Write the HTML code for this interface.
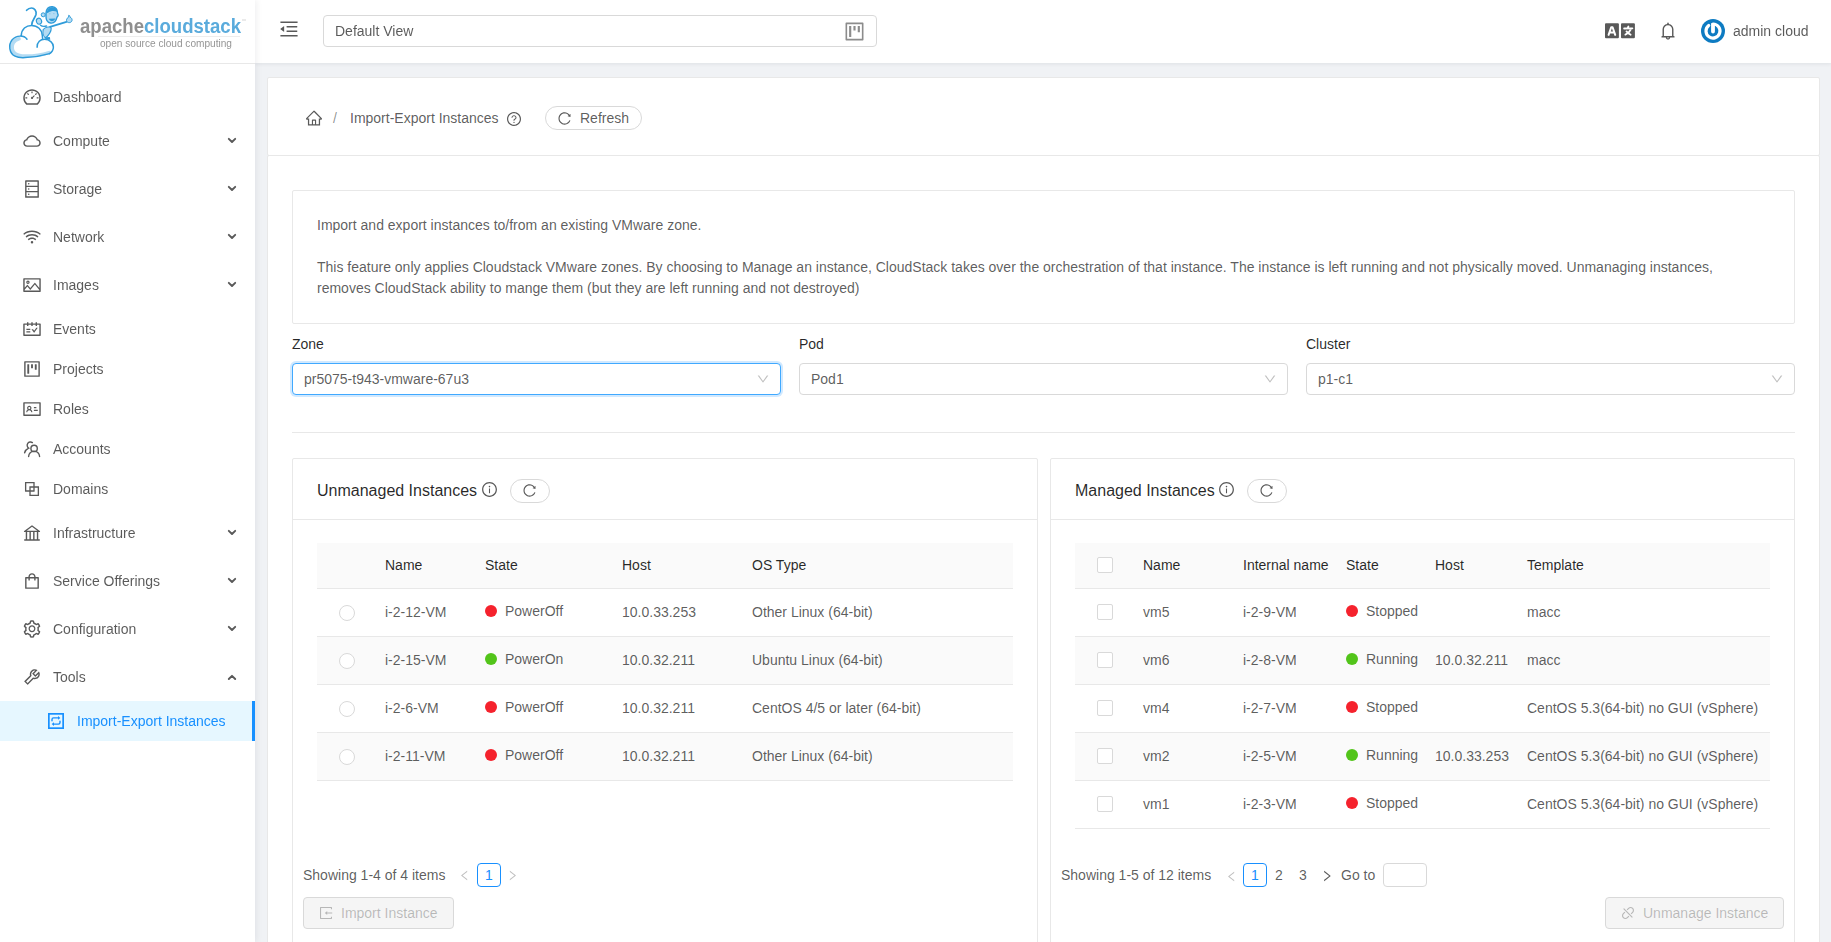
<!DOCTYPE html>
<html><head><meta charset="utf-8">
<style>
*{box-sizing:border-box;margin:0;padding:0}
html,body{width:1831px;height:942px;overflow:hidden;background:#f0f2f5;font-family:"Liberation Sans",sans-serif;font-size:14px;color:rgba(0,0,0,.65);position:relative}
.a{position:absolute}
svg.a{display:block}
.a svg{display:block}
</style></head>
<body>
<div class="a" style="left:0;top:0;width:255px;height:942px;z-index:5;will-change:transform;background:#fff;box-shadow:2px 0 6px rgba(0,21,41,.06)">
<div class="a" style="left:0;top:63px;width:255px;height:1px;background:#e8e8e8"></div>
<svg class="a" style="left:0;top:0" width="255" height="62" viewBox="0 0 255 62">
<g fill="none" stroke-linecap="round" stroke-linejoin="round">
<path d="M19 38.8 C13.5 40 11.2 45 12.3 49.5 C13.3 53.5 17 55.6 22 56 C32 56.4 42 55 49 52.6" stroke="#b3dbf3" stroke-width="3.6"/>
<path d="M27 39.2 C24 35.2 16.5 34.8 12.2 39.8 C8 45 9.3 53.2 15 56.2 C17.5 57.5 21 57.8 25 57.6 C34 57.2 43 55.5 49.6 53.6" stroke="#2e9bd9" stroke-width="1.5"/>
<path d="M21.2 35.8 C21.5 29 26 25.4 31.7 25.4 C37.5 25.4 42 29.5 42.3 35.5 L42.6 38.3" stroke="#2e9bd9" stroke-width="1.5"/>
<path d="M37.1 47.2 C37 42 40.5 39.3 44.5 39.3 C49.5 39.3 53.5 43 53.4 47 C53.3 50 51.8 52.3 49.6 53.6" stroke="#2e9bd9" stroke-width="1.5"/>
<path d="M31.7 25 C32 20 35 18 36 14.5 C36.8 11 34.5 8 31.5 8 C29 8 27.5 9.3 26.6 10.3" stroke="#2e9bd9" stroke-width="1.7"/>
<path d="M40.5 25.2 C42 26.5 44.5 26.5 46.5 26" stroke="#2e9bd9" stroke-width="1.4"/>
<path d="M50 26.8 L66.5 21.8" stroke="#2e9bd9" stroke-width="1.8"/>
</g>
<path d="M43.2 29.5 C45.5 26.8 50.5 26.2 51.2 28 C51.6 31 48.5 36 45.2 37.8 C43.2 36 42.6 32 43.2 29.5Z" fill="#b3dbf3" stroke="#2e9bd9" stroke-width="1.1"/>
<path d="M45 37.2 L49.8 37 L50.3 39.8 L45.5 39.8Z" fill="#2e9bd9"/>
<ellipse cx="39" cy="21.2" rx="2.6" ry="3" fill="#b3dbf3" stroke="#2e9bd9" stroke-width="1.1" transform="rotate(-20 39 21.2)"/>
<path d="M66.5 20.5 C66.5 18.5 67.8 17.5 68.6 17.2 L68.8 15.2 C69.5 15.3 70 16.5 70.2 17.3 C71.5 17.8 72.3 19 72 20.6 C71.6 22.2 70 22.8 68.6 22.6 C67.3 22.3 66.5 21.5 66.5 20.5Z" fill="#b3dbf3" stroke="#2e9bd9" stroke-width="1"/>
<circle cx="43.2" cy="14.8" r="2" fill="#b3dbf3" stroke="#2e9bd9" stroke-width="1"/>
<path d="M46 13 C46.5 8 49.5 6.5 52.5 6.8 C56 7.2 57.5 10 57.6 13.5 C58.5 14.5 58.2 16.5 57 17.2 C56 21.5 53.5 23.5 50.5 23 C47.5 22.5 46 19.5 46 16.5Z" fill="#b3dbf3" stroke="#2e9bd9" stroke-width="1.4"/>
<path d="M46.3 13.5 C47 9 50 7.2 52.5 7.3 C55.5 7.5 57 9.5 57.3 12 C55 10.5 51 10.5 48.5 12.5Z" fill="#2e9bd9"/>
<path d="M49 13.8 H50.6 M53 13.6 H54.6" stroke="#7cc0ea" stroke-width="0.7"/>
<path d="M48.8 18.8 C50 22 54 22 55.3 18.6Z" fill="#2e9bd9"/>
<text x="80" y="33" font-family="Liberation Sans" font-weight="bold" font-size="20" fill="#8f8f8f" textLength="64" lengthAdjust="spacingAndGlyphs">apache</text>
<text x="144" y="33" font-family="Liberation Sans" font-weight="bold" font-size="20" fill="#5aabdc" textLength="97" lengthAdjust="spacingAndGlyphs">cloudstack</text>
<line x1="98" y1="36.5" x2="240" y2="36.5" stroke="#e8e8e8" stroke-width="0.8"/>
<line x1="242" y1="20" x2="246" y2="20" stroke="#bbb" stroke-width="0.6"/>
<text x="100" y="46.8" font-family="Liberation Sans" font-size="11" fill="#959595" textLength="132" lengthAdjust="spacingAndGlyphs">open source cloud computing</text>
</svg>

<div class="a" style="left:22px;top:87px;"><svg width="20" height="20" viewBox="0 0 1024 1024" fill="#595959" ><path d="M924.8 385.6a446.7 446.7 0 00-96-142.4 446.7 446.7 0 00-142.4-96C631.1 123.8 572.5 112 512 112s-119.1 11.8-174.4 35.2a446.7 446.7 0 00-142.4 96 446.7 446.7 0 00-96 142.4C75.8 440.9 64 499.5 64 560c0 132.7 58.3 257.7 159.9 343.1l1.7 1.4c5.8 4.8 13.1 7.5 20.6 7.5h531.7c7.5 0 14.8-2.7 20.6-7.5l1.7-1.4C901.7 817.7 960 692.7 960 560c0-60.5-11.9-119.1-35.2-174.4zM761.4 836H262.6A371.12 371.12 0 01140 560c0-99.4 38.7-192.8 109-263 70.3-70.3 163.7-109 263-109 99.4 0 192.8 38.7 263 109 70.3 70.3 109 163.7 109 263 0 105.6-44.5 205.5-122.6 276zM623.5 421.5a8.030 8.030 0 00-11.300 0L527.7 506c-18.7-5-39.4-.2-54.1 14.5a55.950 55.950 0 000 79.2 55.950 55.950 0 0079.2 0 55.870 55.870 0 0014.5-54.1l84.5-84.5c3.1-3.1 3.1-8.2 0-11.3l-28.3-28.3zM490 320h44c4.4 0 8-3.6 8-8v-80c0-4.4-3.6-8-8-8h-44c-4.4 0-8 3.6-8 8v80c0 4.4 3.6 8 8 8zm260 218v44c0 4.4 3.6 8 8 8h80c4.4 0 8-3.6 8-8v-44c0-4.4-3.6-8-8-8h-80c-4.4 0-8 3.6-8 8zm12.7-197.2l-31.1-31.1a8.030 8.030 0 00-11.300 0l-56.6 56.6a8.030 8.030 0 000 11.3l31.1 31.1c3.1 3.1 8.2 3.1 11.3 0l56.6-56.6c3.1-3.1 3.1-8.2 0-11.3zm-458.6-31.1a8.030 8.030 0 00-11.300 0l-31.1 31.1a8.030 8.030 0 000 11.3l56.6 56.6c3.1 3.1 8.2 3.1 11.3 0l31.1-31.1c3.1-3.1 3.1-8.2 0-11.3l-56.6-56.6zM262 530h-80c-4.4 0-8 3.6-8 8v44c0 4.4 3.6 8 8 8h80c4.4 0 8-3.6 8-8v-44c0-4.4-3.6-8-8-8z"/></svg></div>
<div class="a" style="left:53px;top:89px;font-size:14px;line-height:normal;white-space:nowrap;color:rgba(0,0,0,.65);">Dashboard</div>
<div class="a" style="left:22px;top:131px;"><svg width="20" height="20" viewBox="0 0 1024 1024" fill="#595959" ><path d="M811.4 418.7C765.6 297.9 648.9 212 512.2 212S258.8 297.8 213 418.6C127.3 441.1 64 519.1 64 612c0 110.5 89.5 200 199.9 200h496.2C870.5 812 960 722.5 960 612c0-92.7-63.1-170.7-148.6-193.3zm36.3 281a123.070 123.070 0 01-87.600 36.300H263.9c-33.1 0-64.2-12.9-87.6-36.3A123.300 123.300 0 01140 612c0-28 9.1-54.3 26.2-76.3a125.700 125.700 0 0166.100-43.700l37.9-9.9 13.9-36.6c8.6-22.8 20.6-44.1 35.7-63.4a245.600 245.600 0 0152.400-49.900c41.1-28.9 89.5-44.2 140-44.2s98.9 15.3 140 44.2c19.9 14 37.5 30.8 52.4 49.9 15.1 19.3 27.1 40.7 35.7 63.4l13.8 36.5 37.8 10c54.3 14.5 92.1 63.8 92.1 120 0 33.1-12.9 64.3-36.3 87.7z"/></svg></div>
<div class="a" style="left:53px;top:133px;font-size:14px;line-height:normal;white-space:nowrap;color:rgba(0,0,0,.65);">Compute</div>
<svg class="a" style="left:227px;top:137px" width="10" height="8" viewBox="0 0 10 8"><polyline points="1.8,1.8 5,5 8.2,1.8" fill="none" stroke="#595959" stroke-width="1.9" stroke-linecap="round" stroke-linejoin="round"/></svg>
<div class="a" style="left:22px;top:179px;"><svg width="20" height="20" viewBox="0 0 1024 1024" fill="#595959" ><path d="M832 64H192c-17.7 0-32 14.3-32 32v832c0 17.7 14.3 32 32 32h640c17.7 0 32-14.3 32-32V96c0-17.7-14.3-32-32-32zm-600 72h560v208H232V136zm560 480H232V408h560v208zm0 272H232V680h560v208zM304 240a40 40 0 1080 0 40 40 0 10-80 0zm0 272a40 40 0 1080 0 40 40 0 10-80 0zm0 272a40 40 0 1080 0 40 40 0 10-80 0z"/></svg></div>
<div class="a" style="left:53px;top:181px;font-size:14px;line-height:normal;white-space:nowrap;color:rgba(0,0,0,.65);">Storage</div>
<svg class="a" style="left:227px;top:185px" width="10" height="8" viewBox="0 0 10 8"><polyline points="1.8,1.8 5,5 8.2,1.8" fill="none" stroke="#595959" stroke-width="1.9" stroke-linecap="round" stroke-linejoin="round"/></svg>
<div class="a" style="left:22px;top:227px;"><svg width="20" height="20" viewBox="0 0 1024 1024" fill="#595959" ><path d="M723 620.5C666.8 571.6 593.4 542 513 542s-153.8 29.6-210.1 78.6a8.100 8.100 0 00-.800 11.200l36 42.9c2.9 3.4 8 3.8 11.4.9C393.1 637.2 450.3 614 513 614s119.9 23.2 163.5 61.5c3.4 2.9 8.5 2.5 11.4-.9l36-42.9c2.8-3.3 2.4-8.3-.9-11.2zm117.4-140.1C751.7 406.5 637.6 362 513 362s-238.7 44.5-327.5 118.4a8.050 8.050 0 00-1 11.300l36 42.9c2.8 3.4 7.9 3.8 11.2 1C308 472.2 406.1 434 513 434s205 38.2 281.2 101.6c3.4 2.8 8.4 2.4 11.2-1l36-42.9c2.8-3.4 2.4-8.5-1-11.3zm116.7-139C835.7 241.8 680.3 182 511 182c-168.2 0-322.6 59-443.7 157.4a8 8 0 00-1.100 11.400l36 42.9c2.8 3.3 7.8 3.8 11.1 1.1C222 306.7 360.3 254 511 254c151.8 0 291 53.5 400 142.7 3.4 2.8 8.4 2.3 11.2-1.1l36-42.9c2.9-3.4 2.4-8.5-1.1-11.3zM448 778a64 64 0 10128 0 64 64 0 10-128 0z"/></svg></div>
<div class="a" style="left:53px;top:229px;font-size:14px;line-height:normal;white-space:nowrap;color:rgba(0,0,0,.65);">Network</div>
<svg class="a" style="left:227px;top:233px" width="10" height="8" viewBox="0 0 10 8"><polyline points="1.8,1.8 5,5 8.2,1.8" fill="none" stroke="#595959" stroke-width="1.9" stroke-linecap="round" stroke-linejoin="round"/></svg>
<div class="a" style="left:22px;top:275px;"><svg width="20" height="20" viewBox="0 0 1024 1024" fill="#595959" ><path d="M928 160H96c-17.7 0-32 14.3-32 32v640c0 17.7 14.3 32 32 32h832c17.7 0 32-14.3 32-32V192c0-17.7-14.3-32-32-32zm-40 632H136v-39.9l138.5-164.3 150.1 178L658.1 489 888 761.6V792zm0-129.8L664.2 396.8c-3.2-3.8-9-3.8-12.2 0L424.6 666.4l-144-170.7c-3.2-3.8-9-3.8-12.2 0L136 652.7V232h752v430.2zM304 456a88 88 0 100-176 88 88 0 000 176zm0-116c15.5 0 28 12.5 28 28s-12.5 28-28 28-28-12.5-28-28 12.5-28 28-28z"/></svg></div>
<div class="a" style="left:53px;top:277px;font-size:14px;line-height:normal;white-space:nowrap;color:rgba(0,0,0,.65);">Images</div>
<svg class="a" style="left:227px;top:281px" width="10" height="8" viewBox="0 0 10 8"><polyline points="1.8,1.8 5,5 8.2,1.8" fill="none" stroke="#595959" stroke-width="1.9" stroke-linecap="round" stroke-linejoin="round"/></svg>
<div class="a" style="left:22px;top:319px;"><svg width="20" height="20" viewBox="0 0 1024 1024" fill="#595959" ><path d="M928 224H768v-56c0-4.4-3.6-8-8-8h-56c-4.4 0-8 3.6-8 8v56H548v-56c0-4.4-3.6-8-8-8h-56c-4.4 0-8 3.6-8 8v56H328v-56c0-4.4-3.6-8-8-8h-56c-4.4 0-8 3.6-8 8v56H96c-17.7 0-32 14.3-32 32v576c0 17.7 14.3 32 32 32h832c17.7 0 32-14.3 32-32V256c0-17.7-14.3-32-32-32zm-40 568H136V296h120v56c0 4.4 3.6 8 8 8h56c4.4 0 8-3.6 8-8v-56h148v56c0 4.4 3.6 8 8 8h56c4.4 0 8-3.6 8-8v-56h148v56c0 4.4 3.6 8 8 8h56c4.4 0 8-3.6 8-8v-56h120v496zM416 496H232c-4.4 0-8 3.6-8 8v48c0 4.4 3.6 8 8 8h184c4.4 0 8-3.6 8-8v-48c0-4.4-3.600-8-8-8zm0 136H232c-4.4 0-8 3.6-8 8v48c0 4.4 3.6 8 8 8h184c4.4 0 8-3.6 8-8v-48c0-4.4-3.6-8-8-8zm308.2-177.4L620.6 598.3l-52.8-73.1c-3-4.2-7.8-6.6-12.9-6.6H500c-6.5 0-10.3 7.4-6.5 12.7l114.1 158.2a15.900 15.900 0 0025.800 0l165-228.7c3.8-5.3 0-12.7-6.5-12.7H735c-5-.1-9.8 2.4-12.8 6.5z"/></svg></div>
<div class="a" style="left:53px;top:321px;font-size:14px;line-height:normal;white-space:nowrap;color:rgba(0,0,0,.65);">Events</div>
<div class="a" style="left:22px;top:359px;"><svg width="20" height="20" viewBox="0 0 1024 1024" fill="#595959" ><path d="M280 752h80c4.4 0 8-3.6 8-8V280c0-4.4-3.6-8-8-8h-80c-4.4 0-8 3.6-8 8v464c0 4.4 3.6 8 8 8zm192-280h80c4.4 0 8-3.6 8-8V280c0-4.4-3.6-8-8-8h-80c-4.4 0-8 3.6-8 8v184c0 4.4 3.6 8 8 8zm192 72h80c4.4 0 8-3.6 8-8V280c0-4.4-3.6-8-8-8h-80c-4.4 0-8 3.6-8 8v256c0 4.4 3.6 8 8 8zm216-432H144c-17.7 0-32 14.3-32 32v736c0 17.7 14.3 32 32 32h736c17.7 0 32-14.3 32-32V144c0-17.7-14.3-32-32-32zm-40 728H184V184h656v656z"/></svg></div>
<div class="a" style="left:53px;top:361px;font-size:14px;line-height:normal;white-space:nowrap;color:rgba(0,0,0,.65);">Projects</div>
<div class="a" style="left:22px;top:399px;"><svg width="20" height="20" viewBox="0 0 1024 1024" fill="#595959" ><path d="M928 160H96c-17.7 0-32 14.3-32 32v640c0 17.7 14.3 32 32 32h832c17.7 0 32-14.3 32-32V192c0-17.7-14.3-32-32-32zm-40 632H136V232h752v560zM610.3 476h123.4c1.3 0 2.3-3.6 2.3-8v-48c0-4.4-1-8-2.3-8H610.3c-1.3 0-2.3 3.6-2.3 8v48c0 4.4 1 8 2.3 8zm4.8 144h185.7c3.9 0 7.1-3.6 7.1-8v-48c0-4.4-3.2-8-7.1-8H615.1c-3.9 0-7.1 3.6-7.1 8v48c0 4.4 3.2 8 7.1 8zM224 673h43.9c4.2 0 7.6-3.3 7.9-7.5 3.8-50.5 46-90.5 97.2-90.5s93.4 40 97.2 90.5c.3 4.2 3.7 7.5 7.9 7.5H522a8 8 0 008-8.400c-2.8-53.3-32-99.7-74.6-126.1a111.800 111.800 0 0029.100-75.500c0-61.9-49.9-112-111.4-112s-111.4 50.1-111.4 112c0 29.1 11 55.5 29.1 75.5a158.090 158.090 0 00-74.600 126.100c-.4 4.6 3.2 8.4 7.8 8.4zm149-262c28.5 0 51.7 23.3 51.7 52s-23.2 52-51.7 52-51.7-23.3-51.7-52 23.2-52 51.7-52z"/></svg></div>
<div class="a" style="left:53px;top:401px;font-size:14px;line-height:normal;white-space:nowrap;color:rgba(0,0,0,.65);">Roles</div>
<svg class="a" style="left:22px;top:439px" width="20" height="20" viewBox="0 0 20 20"><g fill="none" stroke="#595959" stroke-width="1.4" stroke-linecap="round"><circle cx="12.1" cy="9.4" r="3.2"/><path d="M6.6 17.6A5.5 5.5 0 0 1 17.6 17.6"/><path d="M10.4 3.6A3.3 3.3 0 1 0 6.6 9.1Q3.6 10.4 2.6 13.8"/></g></svg>
<div class="a" style="left:53px;top:441px;font-size:14px;line-height:normal;white-space:nowrap;color:rgba(0,0,0,.65);">Accounts</div>
<div class="a" style="left:22px;top:479px;"><svg width="20" height="20" viewBox="0 0 1024 1024" fill="#595959" ><path d="M856 376H648V168c0-8.8-7.2-16-16-16H168c-8.8 0-16 7.2-16 16v464c0 8.8 7.2 16 16 16h208v208c0 8.8 7.2 16 16 16h464c8.8 0 16-7.2 16-16V392c0-8.8-7.2-16-16-16zm-480 16v188H220V220h360v156H392c-8.8 0-16 7.2-16 16zm204 52v136H444V444h136zm224 360H444V648h188c8.8 0 16-7.2 16-16V444h156v360z"/></svg></div>
<div class="a" style="left:53px;top:481px;font-size:14px;line-height:normal;white-space:nowrap;color:rgba(0,0,0,.65);">Domains</div>
<div class="a" style="left:22px;top:523px;"><svg width="20" height="20" viewBox="0 0 1024 1024" fill="#595959" ><path d="M894 462c30.9 0 43.8-39.7 18.7-58L530.8 126.2a31.810 31.810 0 00-37.600 0L111.3 404c-25.1 18.2-12.2 58 18.8 58H192v374h-72c-4.4 0-8 3.6-8 8v52c0 4.4 3.6 8 8 8h784c4.4 0 8-3.6 8-8v-52c0-4.4-3.6-8-8-8h-72V462h62zM512 196.7l271.1 197.2H240.9L512 196.7zM264 462h117v374H264V462zm189 0h117v374H453V462zm307 374H642V462h118v374z"/></svg></div>
<div class="a" style="left:53px;top:525px;font-size:14px;line-height:normal;white-space:nowrap;color:rgba(0,0,0,.65);">Infrastructure</div>
<svg class="a" style="left:227px;top:529px" width="10" height="8" viewBox="0 0 10 8"><polyline points="1.8,1.8 5,5 8.2,1.8" fill="none" stroke="#595959" stroke-width="1.9" stroke-linecap="round" stroke-linejoin="round"/></svg>
<div class="a" style="left:22px;top:571px;"><svg width="20" height="20" viewBox="0 0 1024 1024" fill="#595959" ><path d="M832 312H696v-16c0-101.6-82.4-184-184-184s-184 82.4-184 184v16H192c-17.7 0-32 14.3-32 32v536c0 17.7 14.3 32 32 32h640c17.7 0 32-14.3 32-32V344c0-17.7-14.3-32-32-32zm-432-16c0-61.9 50.1-112 112-112s112 50.1 112 112v16H400v-16zm392 544H232V384h96v88c0 4.4 3.6 8 8 8h56c4.4 0 8-3.6 8-8v-88h224v88c0 4.4 3.6 8 8 8h56c4.4 0 8-3.6 8-8v-88h96v456z"/></svg></div>
<div class="a" style="left:53px;top:573px;font-size:14px;line-height:normal;white-space:nowrap;color:rgba(0,0,0,.65);">Service Offerings</div>
<svg class="a" style="left:227px;top:577px" width="10" height="8" viewBox="0 0 10 8"><polyline points="1.8,1.8 5,5 8.2,1.8" fill="none" stroke="#595959" stroke-width="1.9" stroke-linecap="round" stroke-linejoin="round"/></svg>
<div class="a" style="left:22px;top:619px;"><svg width="20" height="20" viewBox="0 0 1024 1024" fill="#595959" ><path d="M924.8 625.7l-65.5-56c3.1-19 4.7-38.4 4.7-57.8s-1.6-38.8-4.7-57.8l65.5-56a32.030 32.030 0 009.300-35.200l-.9-2.6a443.740 443.740 0 00-79.700-137.900l-1.8-2.1a32.120 32.120 0 00-35.100-9.500l-81.3 28.9c-30-24.6-63.5-44-99.7-57.6l-15.7-85a32.050 32.050 0 00-25.800-25.700l-2.7-.5c-52.1-9.4-106.9-9.4-159 0l-2.7.5a32.050 32.050 0 00-25.800 25.700l-15.8 85.4a351.860 351.860 0 00-99 57.400l-81.9-29.1a32 32 0 00-35.100 9.500l-1.8 2.1a446.020 446.020 0 00-79.700 137.900l-.9 2.6c-4.5 12.5-.8 26.5 9.3 35.2l66.3 56.6c-3.1 18.8-4.6 38-4.6 57.1 0 19.2 1.5 38.4 4.6 57.1L99 625.5a32.030 32.030 0 00-9.300 35.200l.9 2.6c18.1 50.4 44.9 96.9 79.7 137.9l1.8 2.1a32.120 32.120 0 0035.100 9.500l81.9-29.1c29.8 24.5 63.1 43.9 99 57.4l15.8 85.4a32.050 32.050 0 0025.800 25.700l2.7.5a449.400 449.400 0 00159 0l2.7-.5a32.050 32.050 0 0025.800-25.700l15.7-85a350 350 0 0099.700-57.600l81.3 28.9a32 32 0 0035.100-9.500l1.8-2.1c34.8-41.1 61.6-87.5 79.7-137.9l.9-2.6c4.5-12.3.8-26.3-9.3-35zM788.3 465.9c2.5 15.1 3.8 30.6 3.8 46.1s-1.3 31-3.8 46.1l-6.6 40.1 74.7 63.9a370.030 370.030 0 01-42.600 73.600L721 702.8l-31.4 25.8c-23.9 19.6-50.5 35-79.3 45.8l-38.1 14.3-17.9 97a377.500 377.500 0 01-85 0l-17.9-97.2-37.8-14.5c-28.5-10.8-55-26.2-78.7-45.7l-31.4-25.9-93.4 33.2c-17-22.9-31.2-47.6-42.6-73.6l75.5-64.5-6.5-40c-2.4-14.9-3.7-30.3-3.7-45.5 0-15.3 1.2-30.6 3.7-45.5l6.5-40-75.5-64.5c11.3-26.1 25.6-50.7 42.6-73.6l93.4 33.2 31.4-25.9c23.7-19.5 50.2-34.9 78.7-45.7l37.9-14.3 17.9-97.2c28.1-3.2 56.8-3.2 85 0l17.9 97 38.1 14.3c28.7 10.8 55.4 26.2 79.3 45.8l31.4 25.8 92.8-32.9c17 22.9 31.2 47.6 42.6 73.6L781.8 426l6.5 39.9zM512 326c-97.2 0-176 78.8-176 176s78.8 176 176 176 176-78.8 176-176-78.8-176-176-176zm79.2 255.2A111.600 111.600 0 01512 614c-29.9 0-58-11.7-79.2-32.8A111.600 111.600 0 01400 502c0-29.9 11.7-58 32.8-79.2C454 401.6 482.1 390 512 390c29.9 0 58 11.6 79.2 32.8A111.600 111.600 0 01624 502c0 29.9-11.7 58-32.8 79.2z"/></svg></div>
<div class="a" style="left:53px;top:621px;font-size:14px;line-height:normal;white-space:nowrap;color:rgba(0,0,0,.65);">Configuration</div>
<svg class="a" style="left:227px;top:625px" width="10" height="8" viewBox="0 0 10 8"><polyline points="1.8,1.8 5,5 8.2,1.8" fill="none" stroke="#595959" stroke-width="1.9" stroke-linecap="round" stroke-linejoin="round"/></svg>
<div class="a" style="left:22px;top:667px;"><svg width="20" height="20" viewBox="0 0 1024 1024" fill="#595959" ><path d="M876.6 239.5c-.5-.9-1.2-1.8-2-2.5-5-5-13.1-5-18.1 0L684.2 409.3l-67.9-67.9L788.7 169c.8-.8 1.4-1.6 2-2.5 3.6-6.1 1.6-13.9-4.5-17.5-98.2-58-226.8-44.7-311.3 39.7-67 67-89.2 162-66.5 247.4l-293 293c-3 3-2.8 7.9.3 11l169.7 169.7c3.1 3.1 8.1 3.3 11 .3l292.9-292.9c85.5 22.8 180.5.7 247.6-66.4 84.4-84.5 97.7-213.1 39.7-311.3zM786 499.8c-58.1 58.1-145.3 69.3-214.6 33.6l-8.8 8.8-.1-.1-274 274.1-79.2-79.2 230.1-230.1s0 .1.1.1l52.8-52.8c-35.7-69.3-24.5-156.5 33.6-214.6a184.200 184.200 0 01144-53.500L537 318.9a32.050 32.050 0 000 45.300l124.5 124.5a32.050 32.050 0 0045.300 0l132.8-132.8c3.7 51.8-14.4 104.8-53.6 143.9z"/></svg></div>
<div class="a" style="left:53px;top:669px;font-size:14px;line-height:normal;white-space:nowrap;color:rgba(0,0,0,.65);">Tools</div>
<svg class="a" style="left:227px;top:674px" width="10" height="8" viewBox="0 0 10 8"><polyline points="1.8,5 5,1.8 8.2,5" fill="none" stroke="#595959" stroke-width="1.9" stroke-linecap="round" stroke-linejoin="round"/></svg>
<div class="a" style="left:0;top:701px;width:255px;height:40px;background:#e6f7ff"></div>
<div class="a" style="left:252px;top:701px;width:3px;height:40px;background:#1890ff"></div>
<svg class="a" style="left:48px;top:713px" width="16" height="16" viewBox="0 0 16 16"><rect x="0.85" y="0.85" width="14.3" height="14.3" fill="none" stroke="#1890ff" stroke-width="1.7"/><path d="M4 7.8V6.4Q4 4.9 5.5 4.9H10.4M12 8.3V9.6Q12 11.1 10.5 11.1H5.6" fill="none" stroke="#1890ff" stroke-width="1.4" stroke-linecap="round"/><polygon points="10,3 12.4,4.9 10,6.8" fill="#1890ff"/><polygon points="6,9.2 3.6,11.1 6,13" fill="#1890ff"/></svg>
<div class="a" style="left:77px;top:713px;font-size:14px;line-height:normal;white-space:nowrap;color:#1890ff;">Import-Export Instances</div>
</div>
<div class="a" style="left:0;top:0;width:1831px;height:63px;z-index:3;will-change:transform">
<div class="a" style="left:255px;top:0;width:1576px;height:63px;background:#fff;box-shadow:0 1px 4px rgba(0,21,41,.08)"></div>
<div class="a" style="left:278px;top:18px;"><svg width="22" height="22" viewBox="0 0 1024 1024" fill="#595959" ><path d="M408 442h480c4.4 0 8-3.6 8-8v-56c0-4.4-3.6-8-8-8H408c-4.4 0-8 3.6-8 8v56c0 4.4 3.6 8 8 8zm-8 204c0 4.4 3.6 8 8 8h480c4.4 0 8-3.6 8-8v-56c0-4.4-3.6-8-8-8H408c-4.4 0-8 3.6-8 8v56zm504-486H120c-4.4 0-8 3.6-8 8v56c0 4.4 3.6 8 8 8h784c4.4 0 8-3.6 8-8v-56c0-4.4-3.6-8-8-8zm0 632H120c-4.4 0-8 3.6-8 8v56c0 4.4 3.6 8 8 8h784c4.4 0 8-3.6 8-8v-56c0-4.4-3.6-8-8-8zM115.4 518.9L271.7 642c5.8 4.6 14.4.5 14.4-6.9V388.9c0-7.4-8.5-11.5-14.4-6.9L115.4 505.1a8.740 8.740 0 000 13.800z"/></svg></div>
<div class="a" style="left:323px;top:15px;width:554px;height:32px;border:1px solid #d9d9d9;border-radius:4px;background:#fff"></div>
<div class="a" style="left:335px;top:23px;font-size:14px;line-height:normal;white-space:nowrap;color:rgba(0,0,0,.65);">Default View</div>
<div class="a" style="left:843px;top:20px;"><svg width="23" height="23" viewBox="0 0 1024 1024" fill="#8c8c8c" ><path d="M280 752h80c4.4 0 8-3.6 8-8V280c0-4.4-3.6-8-8-8h-80c-4.4 0-8 3.6-8 8v464c0 4.4 3.6 8 8 8zm192-280h80c4.4 0 8-3.6 8-8V280c0-4.4-3.6-8-8-8h-80c-4.4 0-8 3.6-8 8v184c0 4.4 3.6 8 8 8zm192 72h80c4.4 0 8-3.6 8-8V280c0-4.4-3.6-8-8-8h-80c-4.4 0-8 3.6-8 8v256c0 4.4 3.6 8 8 8zm216-432H144c-17.7 0-32 14.3-32 32v736c0 17.7 14.3 32 32 32h736c17.7 0 32-14.3 32-32V144c0-17.7-14.3-32-32-32zm-40 728H184V184h656v656z"/></svg></div>
<svg class="a" style="left:1605px;top:23px" width="30" height="16" viewBox="0 0 30 16"><rect x="0" y="0.3" width="13.9" height="15" rx="1" fill="#595959"/><rect x="16" y="0.3" width="13.9" height="15" rx="1" fill="#595959"/><g stroke="#fff" stroke-width="2" fill="none" stroke-linecap="round" stroke-linejoin="round"><path d="M3.6 11.9L6.2 4.3H7.6L10.2 11.9M4.9 9.4H8.9"/></g><g transform="translate(16 0)" stroke="#fff" stroke-width="1.8" fill="none" stroke-linecap="round" stroke-linejoin="round"><path d="M7.4 3.5L6.5 5.3M3.1 5.5L11.4 5.3M9.8 6.3Q8.2 10 4.4 11.6M5.5 8.4Q7.4 10.9 9.6 11.7"/></g></svg>
<div class="a" style="left:1658px;top:21px;"><svg width="20" height="20" viewBox="0 0 1024 1024" fill="#595959" ><path d="M816 768h-24V428c0-141.1-104.3-257.7-240-277.1V112c0-22.1-17.9-40-40-40s-40 17.9-40 40v38.9c-135.7 19.4-240 136-240 277.1v340h-24c-17.7 0-32 14.3-32 32v32c0 4.4 3.6 8 8 8h216c0 61.8 50.2 112 112 112s112-50.2 112-112h216c4.4 0 8-3.6 8-8v-32c0-17.7-14.3-32-32-32zM512 888c-26.5 0-48-21.5-48-48h96c0 26.5-21.5 48-48 48zM304 768V428c0-55.6 21.6-107.8 60.9-147.1S456.4 220 512 220c55.6 0 107.8 21.6 147.1 60.9S720 372.4 720 428v340H304z"/></svg></div>
<svg class="a" style="left:1700px;top:18px" width="26" height="26" viewBox="0 0 26 26"><circle cx="13" cy="13" r="12" fill="#0d7bc2"/><path d="M13 6A7 7 0 1 1 8.69 7.48" fill="none" stroke="#fff" stroke-width="3.2" stroke-linecap="round"/><path d="M11.1 5.2H14.9V13.6A1.9 1.9 0 0 1 11.1 13.6Z" fill="#fff"/></svg>
<div class="a" style="left:1733px;top:23px;font-size:14px;line-height:normal;white-space:nowrap;color:rgba(0,0,0,.65);">admin cloud</div>
</div>
<div class="a" style="left:267px;top:77px;width:1553px;height:79px;background:#fff;border:1px solid #e8e8e8;border-radius:2px"></div>
<div class="a" style="left:267px;top:155px;width:1553px;height:800px;background:#fff;border:1px solid #e8e8e8;border-radius:2px"></div>
<div class="a" style="left:305px;top:109px;"><svg width="18" height="18" viewBox="0 0 1024 1024" fill="#595959" ><path d="M946.5 505L560.1 118.8l-25.9-25.9a31.500 31.500 0 00-44.400 0L77.5 505a63.900 63.900 0 00-18.800 46c.4 35.2 29.7 63.3 64.9 63.3h42.5V940h691.8V614.3h43.4c17.1 0 33.2-6.7 45.3-18.8a63.600 63.600 0 0018.700-45.300c0-17-6.7-33.1-18.8-45.2zM568 868H456V664h112v204zm217.9-325.7V868H632V640c0-22.1-17.9-40-40-40H432c-22.1 0-40 17.9-40 40v228H238.1V542.3h-96l370-369.7 23.1 23.1L882 542.3h-96.1z"/></svg></div>
<div class="a" style="left:333px;top:110px;font-size:14px;line-height:normal;white-space:nowrap;color:rgba(0,0,0,.45);">/</div>
<div class="a" style="left:350px;top:110px;font-size:14px;line-height:normal;white-space:nowrap;color:rgba(0,0,0,.65);">Import-Export Instances</div>
<div class="a" style="left:506px;top:111px;"><svg width="16" height="16" viewBox="0 0 1024 1024" fill="#595959" ><path d="M512 64C264.6 64 64 264.6 64 512s200.6 448 448 448 448-200.6 448-448S759.4 64 512 64zm0 820c-205.4 0-372-166.6-372-372s166.6-372 372-372 372 166.6 372 372-166.6 372-372 372zM623.6 316.7C593.6 290.4 554 276 512 276s-81.6 14.5-111.6 40.7C369.2 344 352 380.7 352 420v7.6c0 4.4 3.6 8 8 8h48c4.4 0 8-3.6 8-8V420c0-44.1 43.1-80 96-80s96 35.9 96 80c0 31.1-22 59.6-56.1 72.7-21.2 8.1-39.2 22.3-52.1 40.9-13.1 19-19.9 41.8-19.9 64.9V620c0 4.4 3.6 8 8 8h48c4.4 0 8-3.6 8-8v-22.7a48.300 48.300 0 0130.900-44.800c59-22.7 97.1-74.7 97.1-132.5.1-39.3-17.1-76-48.3-103.3zM472 732a40 40 0 1080 0 40 40 0 10-80 0z"/></svg></div>
<div class="a" style="left:545px;top:106px;width:97px;height:24px;border:1px solid #d9d9d9;border-radius:24px;background:#fff"></div>
<div class="a" style="left:557px;top:111px;"><svg width="15" height="15" viewBox="0 0 1024 1024" fill="#595959" ><path d="M909.1 209.3l-56.4 44.1C775.8 155.1 656.2 92 521.9 92 290 92 102.3 279.5 102 511.5 101.7 743.7 289.8 932 521.9 932c181.3 0 335.8-115 394.6-276.1 1.5-4.2-.7-8.9-4.9-10.3l-56.7-19.5a8 8 0 00-10.100 4.800c-1.8 5-3.8 10-5.9 14.9-17.3 41-42.1 77.8-73.7 109.4A344.770 344.770 0 01655.900 829c-42.3 17.9-87.4 27-133.8 27-46.5 0-91.5-9.1-133.8-27A341.500 341.500 0 01279 755.200a342.160 342.160 0 01-73.700-109.400c-17.9-42.4-27-87.4-27-133.9s9.1-91.5 27-133.9c17.3-41 42.1-77.8 73.7-109.4 31.6-31.6 68.4-56.4 109.3-73.8 42.3-17.9 87.4-27 133.8-27 46.5 0 91.5 9.1 133.8 27a341.500 341.500 0 01109.300 73.800c9.9 9.9 19.2 20.4 27.8 31.4l-60.2 47a8 8 0 003 14.100l175.6 43c5 1.2 9.9-2.6 9.9-7.7l.8-180.9c-.1-6.6-7.8-10.3-13-6.2z"/></svg></div>
<div class="a" style="left:580px;top:110px;font-size:14px;line-height:normal;white-space:nowrap;color:rgba(0,0,0,.65);">Refresh</div>
<div class="a" style="left:292px;top:190px;width:1503px;height:134px;border:1px solid #e8e8e8;border-radius:2px"></div>
<div class="a" style="left:317px;top:217px;font-size:14px;line-height:normal;white-space:nowrap;color:rgba(0,0,0,.65);">Import and export instances to/from an existing VMware zone.</div>
<div class="a" style="left:317px;top:259px;font-size:14px;line-height:normal;white-space:nowrap;color:rgba(0,0,0,.65);">This feature only applies Cloudstack VMware zones. By choosing to Manage an instance, CloudStack takes over the orchestration of that instance. The instance is left running and not physically moved. Unmanaging instances,</div>
<div class="a" style="left:317px;top:280px;font-size:14px;line-height:normal;white-space:nowrap;color:rgba(0,0,0,.65);">removes CloudStack ability to mange them (but they are left running and not destroyed)</div>
<div class="a" style="left:292px;top:336px;font-size:14px;line-height:normal;white-space:nowrap;color:rgba(0,0,0,.85);">Zone</div>
<div class="a" style="left:292px;top:363px;width:489px;height:32px;border:1px solid #40a9ff;border-radius:4px;box-shadow:0 0 0 2px rgba(24,144,255,.2);background:#fff"></div>
<div class="a" style="left:304px;top:371px;font-size:14px;line-height:normal;white-space:nowrap;color:rgba(0,0,0,.65);">pr5075-t943-vmware-67u3</div>
<div class="a" style="left:756px;top:372px;"><svg width="14" height="14" viewBox="0 0 1024 1024" fill="rgba(0,0,0,.25)" ><path d="M884 256h-75c-5.1 0-9.9 2.5-12.9 6.6L512 654.2 227.9 262.6c-3-4.1-7.8-6.6-12.9-6.6h-75c-6.5 0-10.3 7.4-6.5 12.7l352.6 486.1c12.8 17.6 39 17.6 51.7 0l352.6-486.1c3.9-5.3.1-12.7-6.400-12.700z"/></svg></div>
<div class="a" style="left:799px;top:336px;font-size:14px;line-height:normal;white-space:nowrap;color:rgba(0,0,0,.85);">Pod</div>
<div class="a" style="left:799px;top:363px;width:489px;height:32px;border:1px solid #d9d9d9;border-radius:4px;background:#fff"></div>
<div class="a" style="left:811px;top:371px;font-size:14px;line-height:normal;white-space:nowrap;color:rgba(0,0,0,.65);">Pod1</div>
<div class="a" style="left:1263px;top:372px;"><svg width="14" height="14" viewBox="0 0 1024 1024" fill="rgba(0,0,0,.25)" ><path d="M884 256h-75c-5.1 0-9.9 2.5-12.9 6.6L512 654.2 227.9 262.6c-3-4.1-7.8-6.6-12.9-6.6h-75c-6.5 0-10.3 7.4-6.5 12.7l352.6 486.1c12.8 17.6 39 17.6 51.7 0l352.6-486.1c3.9-5.3.1-12.7-6.400-12.700z"/></svg></div>
<div class="a" style="left:1306px;top:336px;font-size:14px;line-height:normal;white-space:nowrap;color:rgba(0,0,0,.85);">Cluster</div>
<div class="a" style="left:1306px;top:363px;width:489px;height:32px;border:1px solid #d9d9d9;border-radius:4px;background:#fff"></div>
<div class="a" style="left:1318px;top:371px;font-size:14px;line-height:normal;white-space:nowrap;color:rgba(0,0,0,.65);">p1-c1</div>
<div class="a" style="left:1770px;top:372px;"><svg width="14" height="14" viewBox="0 0 1024 1024" fill="rgba(0,0,0,.25)" ><path d="M884 256h-75c-5.1 0-9.9 2.5-12.9 6.6L512 654.2 227.9 262.6c-3-4.1-7.8-6.6-12.9-6.6h-75c-6.5 0-10.3 7.4-6.5 12.7l352.6 486.1c12.8 17.6 39 17.6 51.7 0l352.6-486.1c3.9-5.3.1-12.7-6.400-12.700z"/></svg></div>
<div class="a" style="left:292px;top:432px;width:1503px;height:1px;background:#e8e8e8"></div>
<div class="a" style="left:292px;top:458px;width:746px;height:500px;border:1px solid #e8e8e8;border-radius:2px"></div>
<div class="a" style="left:292px;top:519px;width:746px;height:1px;background:#e8e8e8"></div>
<div class="a" style="left:317px;top:482px;font-size:16px;line-height:normal;white-space:nowrap;color:rgba(0,0,0,.85);">Unmanaged Instances</div>
<div class="a" style="left:481px;top:481px;"><svg width="17" height="17" viewBox="0 0 1024 1024" fill="#595959" ><path d="M512 64C264.6 64 64 264.6 64 512s200.6 448 448 448 448-200.6 448-448S759.4 64 512 64zm0 820c-205.4 0-372-166.6-372-372s166.6-372 372-372 372 166.6 372 372-166.6 372-372 372zM464 336a48 48 0 1096 0 48 48 0 10-96 0zm72 112h-48c-4.4 0-8 3.6-8 8v272c0 4.4 3.6 8 8 8h48c4.4 0 8-3.6 8-8V456c0-4.4-3.6-8-8-8z"/></svg></div>
<div class="a" style="left:510px;top:479px;width:40px;height:24px;border:1px solid #d9d9d9;border-radius:24px;background:#fff"></div>
<div class="a" style="left:522px;top:483px;"><svg width="15" height="15" viewBox="0 0 1024 1024" fill="#595959" ><path d="M909.1 209.3l-56.4 44.1C775.8 155.1 656.2 92 521.9 92 290 92 102.3 279.5 102 511.5 101.7 743.7 289.8 932 521.9 932c181.3 0 335.8-115 394.6-276.1 1.5-4.2-.7-8.9-4.9-10.3l-56.7-19.5a8 8 0 00-10.100 4.800c-1.8 5-3.8 10-5.9 14.9-17.3 41-42.1 77.8-73.7 109.4A344.770 344.770 0 01655.900 829c-42.3 17.9-87.4 27-133.8 27-46.5 0-91.5-9.1-133.8-27A341.500 341.500 0 01279 755.200a342.160 342.160 0 01-73.700-109.400c-17.9-42.4-27-87.4-27-133.9s9.1-91.5 27-133.9c17.3-41 42.1-77.8 73.7-109.4 31.6-31.6 68.4-56.4 109.3-73.8 42.3-17.9 87.4-27 133.8-27 46.5 0 91.5 9.1 133.8 27a341.500 341.500 0 01109.300 73.800c9.9 9.9 19.2 20.4 27.8 31.4l-60.2 47a8 8 0 003 14.100l175.6 43c5 1.2 9.9-2.6 9.9-7.7l.8-180.9c-.1-6.6-7.8-10.3-13-6.2z"/></svg></div>
<div class="a" style="left:1050px;top:458px;width:745px;height:500px;border:1px solid #e8e8e8;border-radius:2px"></div>
<div class="a" style="left:1050px;top:519px;width:745px;height:1px;background:#e8e8e8"></div>
<div class="a" style="left:1075px;top:482px;font-size:16px;line-height:normal;white-space:nowrap;color:rgba(0,0,0,.85);">Managed Instances</div>
<div class="a" style="left:1218px;top:481px;"><svg width="17" height="17" viewBox="0 0 1024 1024" fill="#595959" ><path d="M512 64C264.6 64 64 264.6 64 512s200.6 448 448 448 448-200.6 448-448S759.4 64 512 64zm0 820c-205.4 0-372-166.6-372-372s166.6-372 372-372 372 166.6 372 372-166.6 372-372 372zM464 336a48 48 0 1096 0 48 48 0 10-96 0zm72 112h-48c-4.4 0-8 3.6-8 8v272c0 4.4 3.6 8 8 8h48c4.4 0 8-3.6 8-8V456c0-4.4-3.6-8-8-8z"/></svg></div>
<div class="a" style="left:1247px;top:479px;width:40px;height:24px;border:1px solid #d9d9d9;border-radius:24px;background:#fff"></div>
<div class="a" style="left:1259px;top:483px;"><svg width="15" height="15" viewBox="0 0 1024 1024" fill="#595959" ><path d="M909.1 209.3l-56.4 44.1C775.8 155.1 656.2 92 521.9 92 290 92 102.3 279.5 102 511.5 101.7 743.7 289.8 932 521.9 932c181.3 0 335.8-115 394.6-276.1 1.5-4.2-.7-8.9-4.9-10.3l-56.7-19.5a8 8 0 00-10.100 4.800c-1.8 5-3.8 10-5.9 14.9-17.3 41-42.1 77.8-73.7 109.4A344.770 344.770 0 01655.900 829c-42.3 17.9-87.4 27-133.8 27-46.5 0-91.5-9.1-133.8-27A341.500 341.500 0 01279 755.200a342.160 342.160 0 01-73.700-109.400c-17.9-42.4-27-87.4-27-133.9s9.1-91.5 27-133.9c17.3-41 42.1-77.8 73.7-109.4 31.6-31.6 68.4-56.4 109.3-73.8 42.3-17.9 87.4-27 133.8-27 46.5 0 91.5 9.1 133.8 27a341.500 341.500 0 01109.300 73.800c9.9 9.9 19.2 20.4 27.8 31.4l-60.2 47a8 8 0 003 14.100l175.6 43c5 1.2 9.9-2.6 9.9-7.7l.8-180.9c-.1-6.6-7.8-10.3-13-6.2z"/></svg></div>
<div class="a" style="left:317px;top:543px;width:696px;height:46px;background:#fafafa;border-bottom:1px solid #e8e8e8"></div>
<div class="a" style="left:385px;top:557px;font-size:14px;line-height:normal;white-space:nowrap;color:rgba(0,0,0,.85);">Name</div>
<div class="a" style="left:485px;top:557px;font-size:14px;line-height:normal;white-space:nowrap;color:rgba(0,0,0,.85);">State</div>
<div class="a" style="left:622px;top:557px;font-size:14px;line-height:normal;white-space:nowrap;color:rgba(0,0,0,.85);">Host</div>
<div class="a" style="left:752px;top:557px;font-size:14px;line-height:normal;white-space:nowrap;color:rgba(0,0,0,.85);">OS Type</div>
<div class="a" style="left:317px;top:589px;width:696px;height:48px;background:#fff;border-bottom:1px solid #e8e8e8"></div>
<div class="a" style="left:339px;top:605px;width:16px;height:16px;border:1px solid #d9d9d9;border-radius:50%;background:#fff"></div>
<div class="a" style="left:385px;top:604px;font-size:14px;line-height:normal;white-space:nowrap;color:rgba(0,0,0,.65);">i-2-12-VM</div>
<div class="a" style="left:485px;top:605px;width:12px;height:12px;border-radius:50%;background:#f5222d"></div>
<div class="a" style="left:505px;top:603px;font-size:14px;line-height:normal;white-space:nowrap;color:rgba(0,0,0,.65);">PowerOff</div>
<div class="a" style="left:622px;top:604px;font-size:14px;line-height:normal;white-space:nowrap;color:rgba(0,0,0,.65);">10.0.33.253</div>
<div class="a" style="left:752px;top:604px;font-size:14px;line-height:normal;white-space:nowrap;color:rgba(0,0,0,.65);">Other Linux (64-bit)</div>
<div class="a" style="left:317px;top:637px;width:696px;height:48px;background:#fafafa;border-bottom:1px solid #e8e8e8"></div>
<div class="a" style="left:339px;top:653px;width:16px;height:16px;border:1px solid #d9d9d9;border-radius:50%;background:#fff"></div>
<div class="a" style="left:385px;top:652px;font-size:14px;line-height:normal;white-space:nowrap;color:rgba(0,0,0,.65);">i-2-15-VM</div>
<div class="a" style="left:485px;top:653px;width:12px;height:12px;border-radius:50%;background:#52c41a"></div>
<div class="a" style="left:505px;top:651px;font-size:14px;line-height:normal;white-space:nowrap;color:rgba(0,0,0,.65);">PowerOn</div>
<div class="a" style="left:622px;top:652px;font-size:14px;line-height:normal;white-space:nowrap;color:rgba(0,0,0,.65);">10.0.32.211</div>
<div class="a" style="left:752px;top:652px;font-size:14px;line-height:normal;white-space:nowrap;color:rgba(0,0,0,.65);">Ubuntu Linux (64-bit)</div>
<div class="a" style="left:317px;top:685px;width:696px;height:48px;background:#fff;border-bottom:1px solid #e8e8e8"></div>
<div class="a" style="left:339px;top:701px;width:16px;height:16px;border:1px solid #d9d9d9;border-radius:50%;background:#fff"></div>
<div class="a" style="left:385px;top:700px;font-size:14px;line-height:normal;white-space:nowrap;color:rgba(0,0,0,.65);">i-2-6-VM</div>
<div class="a" style="left:485px;top:701px;width:12px;height:12px;border-radius:50%;background:#f5222d"></div>
<div class="a" style="left:505px;top:699px;font-size:14px;line-height:normal;white-space:nowrap;color:rgba(0,0,0,.65);">PowerOff</div>
<div class="a" style="left:622px;top:700px;font-size:14px;line-height:normal;white-space:nowrap;color:rgba(0,0,0,.65);">10.0.32.211</div>
<div class="a" style="left:752px;top:700px;font-size:14px;line-height:normal;white-space:nowrap;color:rgba(0,0,0,.65);">CentOS 4/5 or later (64-bit)</div>
<div class="a" style="left:317px;top:733px;width:696px;height:48px;background:#fafafa;border-bottom:1px solid #e8e8e8"></div>
<div class="a" style="left:339px;top:749px;width:16px;height:16px;border:1px solid #d9d9d9;border-radius:50%;background:#fff"></div>
<div class="a" style="left:385px;top:748px;font-size:14px;line-height:normal;white-space:nowrap;color:rgba(0,0,0,.65);">i-2-11-VM</div>
<div class="a" style="left:485px;top:749px;width:12px;height:12px;border-radius:50%;background:#f5222d"></div>
<div class="a" style="left:505px;top:747px;font-size:14px;line-height:normal;white-space:nowrap;color:rgba(0,0,0,.65);">PowerOff</div>
<div class="a" style="left:622px;top:748px;font-size:14px;line-height:normal;white-space:nowrap;color:rgba(0,0,0,.65);">10.0.32.211</div>
<div class="a" style="left:752px;top:748px;font-size:14px;line-height:normal;white-space:nowrap;color:rgba(0,0,0,.65);">Other Linux (64-bit)</div>
<div class="a" style="left:303px;top:867px;font-size:14px;line-height:normal;white-space:nowrap;color:rgba(0,0,0,.65);">Showing 1-4 of 4 items</div>
<div class="a" style="left:458px;top:869px;"><svg width="13" height="13" viewBox="0 0 1024 1024" fill="rgba(0,0,0,.25)" ><path d="M724 218.3V141c0-6.7-7.7-10.4-12.9-6.3L260.3 486.8a31.860 31.860 0 000 50.300l450.8 352.1c5.3 4.1 12.9.4 12.9-6.3v-77.3c0-4.9-2.3-9.6-6.1-12.6l-360-281 360-281.1c3.8-3 6.1-7.7 6.1-12.6z"/></svg></div>
<div class="a" style="left:477px;top:863px;width:24px;height:24px;border:1px solid #1890ff;border-radius:4px;background:#fff;color:#1890ff;text-align:center;line-height:22px">1</div>
<div class="a" style="left:506px;top:869px;"><svg width="13" height="13" viewBox="0 0 1024 1024" fill="rgba(0,0,0,.25)" ><path d="M765.7 486.8L314.9 134.7A7.970 7.970 0 00302 141v77.3c0 4.9 2.3 9.6 6.1 12.6l360 281.1-360 281.1c-3.9 3-6.1 7.7-6.1 12.6V883c0 6.7 7.7 10.4 12.9 6.3l450.8-352.1a31.960 31.960 0 000-50.400z"/></svg></div>
<div class="a" style="left:303px;top:897px;width:151px;height:32px;border:1px solid #d9d9d9;border-radius:4px;background:#f5f5f5"></div>
<div class="a" style="left:318px;top:905px;"><svg width="16" height="16" viewBox="0 0 1024 1024" fill="rgba(0,0,0,.25)" ><path d="M888.3 757.4h-53.8c-4.2 0-7.7 3.5-7.7 7.7v61.8H197.1V197.1h629.8v61.8c0 4.2 3.5 7.7 7.7 7.7h53.8c4.2 0 7.7-3.4 7.7-7.7V158.7c0-17-13.7-30.7-30.7-30.7H158.7c-17 0-30.7 13.7-30.7 30.7v706.6c0 17 13.7 30.7 30.7 30.7h706.6c17 0 30.7-13.7 30.7-30.7V765.1c0-4.3-3.5-7.7-7.7-7.7zM902 476H588v-76c0-6.7-7.8-10.5-13-6.3l-141.9 112a8 8 0 000 12.600l141.9 112c5.3 4.2 13 .4 13-6.3v-76h314c4.4 0 8-3.6 8-8v-56c0-4.4-3.6-8-8-8z"/></svg></div>
<div class="a" style="left:341px;top:905px;font-size:14px;line-height:normal;white-space:nowrap;color:rgba(0,0,0,.25);">Import Instance</div>
<div class="a" style="left:1075px;top:543px;width:695px;height:46px;background:#fafafa;border-bottom:1px solid #e8e8e8"></div>
<div class="a" style="left:1097px;top:557px;width:16px;height:16px;border:1px solid #d9d9d9;border-radius:2px;background:#fff"></div>
<div class="a" style="left:1143px;top:557px;font-size:14px;line-height:normal;white-space:nowrap;color:rgba(0,0,0,.85);">Name</div>
<div class="a" style="left:1243px;top:557px;font-size:14px;line-height:normal;white-space:nowrap;color:rgba(0,0,0,.85);">Internal name</div>
<div class="a" style="left:1346px;top:557px;font-size:14px;line-height:normal;white-space:nowrap;color:rgba(0,0,0,.85);">State</div>
<div class="a" style="left:1435px;top:557px;font-size:14px;line-height:normal;white-space:nowrap;color:rgba(0,0,0,.85);">Host</div>
<div class="a" style="left:1527px;top:557px;font-size:14px;line-height:normal;white-space:nowrap;color:rgba(0,0,0,.85);">Template</div>
<div class="a" style="left:1075px;top:589px;width:695px;height:48px;background:#fff;border-bottom:1px solid #e8e8e8"></div>
<div class="a" style="left:1097px;top:604px;width:16px;height:16px;border:1px solid #d9d9d9;border-radius:2px;background:#fff"></div>
<div class="a" style="left:1143px;top:604px;font-size:14px;line-height:normal;white-space:nowrap;color:rgba(0,0,0,.65);">vm5</div>
<div class="a" style="left:1243px;top:604px;font-size:14px;line-height:normal;white-space:nowrap;color:rgba(0,0,0,.65);">i-2-9-VM</div>
<div class="a" style="left:1346px;top:605px;width:12px;height:12px;border-radius:50%;background:#f5222d"></div>
<div class="a" style="left:1366px;top:603px;font-size:14px;line-height:normal;white-space:nowrap;color:rgba(0,0,0,.65);">Stopped</div>
<div class="a" style="left:1527px;top:604px;font-size:14px;line-height:normal;white-space:nowrap;color:rgba(0,0,0,.65);">macc</div>
<div class="a" style="left:1075px;top:637px;width:695px;height:48px;background:#fafafa;border-bottom:1px solid #e8e8e8"></div>
<div class="a" style="left:1097px;top:652px;width:16px;height:16px;border:1px solid #d9d9d9;border-radius:2px;background:#fff"></div>
<div class="a" style="left:1143px;top:652px;font-size:14px;line-height:normal;white-space:nowrap;color:rgba(0,0,0,.65);">vm6</div>
<div class="a" style="left:1243px;top:652px;font-size:14px;line-height:normal;white-space:nowrap;color:rgba(0,0,0,.65);">i-2-8-VM</div>
<div class="a" style="left:1346px;top:653px;width:12px;height:12px;border-radius:50%;background:#52c41a"></div>
<div class="a" style="left:1366px;top:651px;font-size:14px;line-height:normal;white-space:nowrap;color:rgba(0,0,0,.65);">Running</div>
<div class="a" style="left:1435px;top:652px;font-size:14px;line-height:normal;white-space:nowrap;color:rgba(0,0,0,.65);">10.0.32.211</div>
<div class="a" style="left:1527px;top:652px;font-size:14px;line-height:normal;white-space:nowrap;color:rgba(0,0,0,.65);">macc</div>
<div class="a" style="left:1075px;top:685px;width:695px;height:48px;background:#fff;border-bottom:1px solid #e8e8e8"></div>
<div class="a" style="left:1097px;top:700px;width:16px;height:16px;border:1px solid #d9d9d9;border-radius:2px;background:#fff"></div>
<div class="a" style="left:1143px;top:700px;font-size:14px;line-height:normal;white-space:nowrap;color:rgba(0,0,0,.65);">vm4</div>
<div class="a" style="left:1243px;top:700px;font-size:14px;line-height:normal;white-space:nowrap;color:rgba(0,0,0,.65);">i-2-7-VM</div>
<div class="a" style="left:1346px;top:701px;width:12px;height:12px;border-radius:50%;background:#f5222d"></div>
<div class="a" style="left:1366px;top:699px;font-size:14px;line-height:normal;white-space:nowrap;color:rgba(0,0,0,.65);">Stopped</div>
<div class="a" style="left:1527px;top:700px;font-size:14px;line-height:normal;white-space:nowrap;color:rgba(0,0,0,.65);">CentOS 5.3(64-bit) no GUI (vSphere)</div>
<div class="a" style="left:1075px;top:733px;width:695px;height:48px;background:#fafafa;border-bottom:1px solid #e8e8e8"></div>
<div class="a" style="left:1097px;top:748px;width:16px;height:16px;border:1px solid #d9d9d9;border-radius:2px;background:#fff"></div>
<div class="a" style="left:1143px;top:748px;font-size:14px;line-height:normal;white-space:nowrap;color:rgba(0,0,0,.65);">vm2</div>
<div class="a" style="left:1243px;top:748px;font-size:14px;line-height:normal;white-space:nowrap;color:rgba(0,0,0,.65);">i-2-5-VM</div>
<div class="a" style="left:1346px;top:749px;width:12px;height:12px;border-radius:50%;background:#52c41a"></div>
<div class="a" style="left:1366px;top:747px;font-size:14px;line-height:normal;white-space:nowrap;color:rgba(0,0,0,.65);">Running</div>
<div class="a" style="left:1435px;top:748px;font-size:14px;line-height:normal;white-space:nowrap;color:rgba(0,0,0,.65);">10.0.33.253</div>
<div class="a" style="left:1527px;top:748px;font-size:14px;line-height:normal;white-space:nowrap;color:rgba(0,0,0,.65);">CentOS 5.3(64-bit) no GUI (vSphere)</div>
<div class="a" style="left:1075px;top:781px;width:695px;height:48px;background:#fff;border-bottom:1px solid #e8e8e8"></div>
<div class="a" style="left:1097px;top:796px;width:16px;height:16px;border:1px solid #d9d9d9;border-radius:2px;background:#fff"></div>
<div class="a" style="left:1143px;top:796px;font-size:14px;line-height:normal;white-space:nowrap;color:rgba(0,0,0,.65);">vm1</div>
<div class="a" style="left:1243px;top:796px;font-size:14px;line-height:normal;white-space:nowrap;color:rgba(0,0,0,.65);">i-2-3-VM</div>
<div class="a" style="left:1346px;top:797px;width:12px;height:12px;border-radius:50%;background:#f5222d"></div>
<div class="a" style="left:1366px;top:795px;font-size:14px;line-height:normal;white-space:nowrap;color:rgba(0,0,0,.65);">Stopped</div>
<div class="a" style="left:1527px;top:796px;font-size:14px;line-height:normal;white-space:nowrap;color:rgba(0,0,0,.65);">CentOS 5.3(64-bit) no GUI (vSphere)</div>
<div class="a" style="left:1061px;top:867px;font-size:14px;line-height:normal;white-space:nowrap;color:rgba(0,0,0,.65);">Showing 1-5 of 12 items</div>
<div class="a" style="left:1225px;top:869.5px;"><svg width="13" height="13" viewBox="0 0 1024 1024" fill="rgba(0,0,0,.25)" ><path d="M724 218.3V141c0-6.7-7.7-10.4-12.9-6.3L260.3 486.8a31.860 31.860 0 000 50.300l450.8 352.1c5.3 4.1 12.9.4 12.9-6.3v-77.3c0-4.9-2.3-9.6-6.1-12.6l-360-281 360-281.1c3.8-3 6.1-7.7 6.1-12.6z"/></svg></div>
<div class="a" style="left:1243px;top:863px;width:24px;height:24px;border:1px solid #1890ff;border-radius:4px;background:#fff;color:#1890ff;text-align:center;line-height:22px">1</div>
<div class="a" style="left:1275px;top:867px;font-size:14px;line-height:normal;white-space:nowrap;color:rgba(0,0,0,.65);">2</div>
<div class="a" style="left:1299px;top:867px;font-size:14px;line-height:normal;white-space:nowrap;color:rgba(0,0,0,.65);">3</div>
<div class="a" style="left:1320px;top:869px;"><svg width="14" height="14" viewBox="0 0 1024 1024" fill="rgba(0,0,0,.65)" ><path d="M765.7 486.8L314.9 134.7A7.970 7.970 0 00302 141v77.3c0 4.9 2.3 9.6 6.1 12.6l360 281.1-360 281.1c-3.9 3-6.1 7.7-6.1 12.6V883c0 6.7 7.7 10.4 12.9 6.3l450.8-352.1a31.960 31.960 0 000-50.400z"/></svg></div>
<div class="a" style="left:1341px;top:867px;font-size:14px;line-height:normal;white-space:nowrap;color:rgba(0,0,0,.65);">Go to</div>
<div class="a" style="left:1383px;top:863px;width:44px;height:24px;border:1px solid #d9d9d9;border-radius:4px;background:#fff"></div>
<div class="a" style="left:1605px;top:897px;width:179px;height:32px;border:1px solid #d9d9d9;border-radius:4px;background:#f5f5f5"></div>
<div class="a" style="left:1620px;top:905px;"><svg width="16" height="16" viewBox="0 0 1024 1024" fill="rgba(0,0,0,.25)" ><path d="M832.6 191.4c-84.6-84.6-221.5-84.6-306 0l-96.9 96.9 51 51 96.9-96.9c53.8-53.8 144.6-59.5 204 0 59.5 59.5 53.8 150.2 0 204l-96.9 96.9 51.1 51.1 96.9-96.9c84.4-84.6 84.4-221.5-.1-306.1zM446.5 781.6c-53.8 53.8-144.6 59.5-204 0-59.5-59.5-53.8-150.2 0-204l96.9-96.9-51.1-51.1-96.9 96.9c-84.6 84.6-84.6 221.5 0 306s221.5 84.6 306 0l96.9-96.9-51-51-96.8 97zM260.3 209.4a8.030 8.030 0 00-11.300 0L209.4 249a8.030 8.030 0 000 11.300l554.4 554.4c3.1 3.1 8.2 3.1 11.3 0l39.6-39.6c3.1-3.1 3.1-8.2 0-11.3L260.3 209.4z"/></svg></div>
<div class="a" style="left:1643px;top:905px;font-size:14px;line-height:normal;white-space:nowrap;color:rgba(0,0,0,.25);">Unmanage Instance</div>
</body></html>
